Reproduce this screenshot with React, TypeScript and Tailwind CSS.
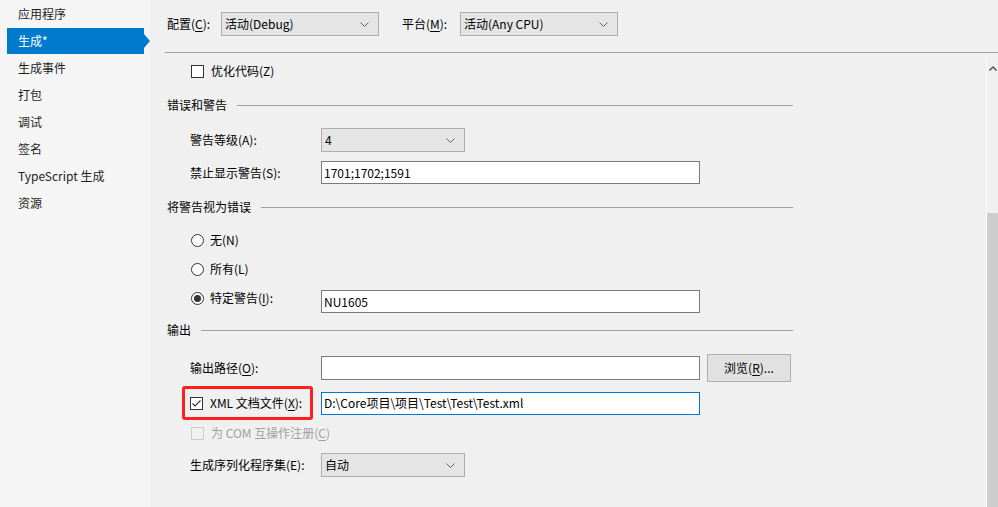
import React from "react";

const F = { fontFamily: '"Noto Sans CJK SC", "Noto Sans", sans-serif' };

function Chevron() {
  return (
    <svg width="9" height="5" viewBox="0 0 9 5" className="shrink-0">
      <path d="M0.5 0.5 L4.5 4.5 L8.5 0.5" fill="none" stroke="#606060" strokeWidth="1" />
    </svg>
  );
}

function Select({ value, w }: { value: string; w: string }) {
  return (
    <div className={`${w} h-[24px] bg-[#e5e5e5] border border-[#adadad] flex items-center justify-between pl-[3px] pr-[9px]`}>
      <span>{value}</span>
      <Chevron />
    </div>
  );
}

function Header({ text }: { text: string }) {
  return (
    <div className="flex items-center w-[643px] gap-[10px] pl-[17px]">
      <span className="whitespace-nowrap">{text}</span>
      <div className="flex-1 h-px bg-[#a0a0a0]" />
    </div>
  );
}

function Checkbox({ checked, disabled }: { checked?: boolean; disabled?: boolean }) {
  return (
    <div
      className={`w-[13px] h-[13px] border shrink-0 flex items-center justify-center ${
        disabled ? "border-[#cccccc] bg-[#f0f0f0]" : "border-[#333333] bg-white"
      }`}
    >
      {checked && (
        <svg width="11" height="11" viewBox="0 0 11 11">
          <path d="M1.5 5.5 L4 8 L9.5 2.5" fill="none" stroke="#333333" strokeWidth="1.1" />
        </svg>
      )}
    </div>
  );
}

function Radio({ checked }: { checked?: boolean }) {
  return (
    <div className="w-[13px] h-[13px] rounded-full border border-[#333333] bg-white shrink-0 flex items-center justify-center">
      {checked && <div className="w-[7px] h-[7px] rounded-full bg-[#333333]" />}
    </div>
  );
}

function U({ c }: { c: string }) {
  return <span className="underline underline-offset-2">{c}</span>;
}

export default function App() {
  const items = ["应用程序", "生成*", "生成事件", "打包", "调试", "签名", "TypeScript 生成", "资源"];
  return (
    <div style={F} className="w-[998px] h-[507px] flex overflow-hidden text-[12px] text-black bg-[#f0f0f0]">
      {/* Sidebar */}
      <div className="w-[150px] h-full bg-[#f5f5f5] shrink-0 flex flex-col">
        {items.map((t, i) =>
          i === 1 ? (
            <div key={t} className="h-[27px] flex items-center">
              <div className="ml-[7px] w-[137px] h-[26px] bg-[#007acc] text-white flex items-center pl-[11px]">
                {t}
              </div>
              <div className="w-0 h-0 border-y-[7px] border-y-transparent border-l-[6px] border-l-[#007acc]" />
            </div>
          ) : (
            <div key={t} className="h-[27px] flex items-center pl-[18px] text-[#1e1e1e]">
              {t}
            </div>
          )
        )}
      </div>

      {/* Main */}
      <div className="flex-1 flex flex-col min-w-0">
        <div className="h-[52px] shrink-0 flex items-center pl-[17px] pb-[4px]">
          <span className="w-[54px]">
            配置(<U c="C" />):
          </span>
          <Select value="活动(Debug)" w="w-[158px]" />
          <span className="ml-[23px] w-[58px]">
            平台(<U c="M" />):
          </span>
          <Select value="活动(Any CPU)" w="w-[158px]" />
        </div>
        <div className="ml-[15px] h-px bg-[#a0a0a0] shrink-0" />

        <div className="flex-1 flex min-h-0">
          <div className="flex-1 flex flex-col">
            {/* optimize */}
            <div className="h-[36px] flex items-center pl-[41px] gap-[7px]">
              <Checkbox />
              <span>优化代码(Z)</span>
            </div>
            <div className="h-[32px] flex items-center">
              <Header text="错误和警告" />
            </div>
            <div className="h-[38px] flex items-center pl-[40px]">
              <span className="w-[131px]">警告等级(A):</span>
              <Select value="4" w="w-[144px]" />
            </div>
            <div className="h-[27px] flex items-center pl-[40px]">
              <span className="w-[131px]">禁止显示警告(S):</span>
              <div className="w-[379px] h-[23px] bg-white border border-[#7a7a7a] flex items-center pl-[2px]">
                1701;1702;1591
              </div>
            </div>
            <div className="h-[42px] flex items-center">
              <Header text="将警告视为错误" />
            </div>
            <div className="h-[24px] flex items-center pl-[41px] gap-[6px]">
              <Radio />
              <span>无(N)</span>
            </div>
            <div className="h-[34px] flex items-center pl-[41px] gap-[6px]">
              <Radio />
              <span>所有(L)</span>
            </div>
            <div className="h-[31px] flex items-center pl-[41px]">
              <div className="w-[130px] flex items-center gap-[6px] mb-[7px]">
                <Radio checked />
                <span>
                  特定警告(<U c="I" />):
                </span>
              </div>
              <div className="w-[379px] h-[23px] bg-white border border-[#7a7a7a] flex items-center pl-[2px]">
                NU1605
              </div>
            </div>
            <div className="h-[26px] flex items-center">
              <Header text="输出" />
            </div>
            <div className="mt-[11px] h-[28px] flex items-center pl-[40px]">
              <span className="w-[131px]">
                输出路径(<U c="O" />):
              </span>
              <div className="w-[379px] h-[24px] bg-white border border-[#7a7a7a]" />
              <div className="ml-[7px] w-[84px] h-[28px] bg-[#e1e1e1] border border-[#adadad] flex items-center justify-center">
                <span>
                  浏览(<U c="R" />)...
                </span>
              </div>
            </div>
            <div className="mt-[4px] h-[34px] flex items-center pl-[32px]">
              <div className="w-[131px] h-[34px] border-[3px] border-[#ff1f1f] rounded-[3px] flex items-center pl-[5px] gap-[7px]">
                <Checkbox checked />
                <span className="whitespace-nowrap">
                  XML 文档文件(<U c="X" />):
                </span>
              </div>
              <div className="ml-[8px] w-[379px] h-[23px] bg-white border border-[#0078d7] flex items-center pl-[2px]">
                D:\Core项目\项目\Test\Test\Test.xml
              </div>
            </div>
            <div className="h-[26px] flex items-center pl-[41px] gap-[7px] text-[#a0a0a0]">
              <Checkbox disabled />
              <span>
                为 COM 互操作注册(<U c="C" />)
              </span>
            </div>
            <div className="h-[38px] flex items-center pl-[40px]">
              <span className="w-[131px]">生成序列化程序集(E):</span>
              <Select value="自动" w="w-[144px]" />
            </div>
          </div>

          {/* Scrollbar */}
          <div className="mt-[6px] w-[12px] shrink-0 flex flex-col border-l border-white">
            <div className="h-[20px] flex items-start justify-center pt-[7px]">
              <svg width="8" height="5" viewBox="0 0 8 5">
                <path d="M0.5 4.5 L4 1 L7.5 4.5" fill="none" stroke="#606060" strokeWidth="1.6" />
              </svg>
            </div>
            <div className="h-[134px]" />
            <div className="flex-1 bg-[#cdcdcd]" />
          </div>
        </div>
      </div>
    </div>
  );
}
